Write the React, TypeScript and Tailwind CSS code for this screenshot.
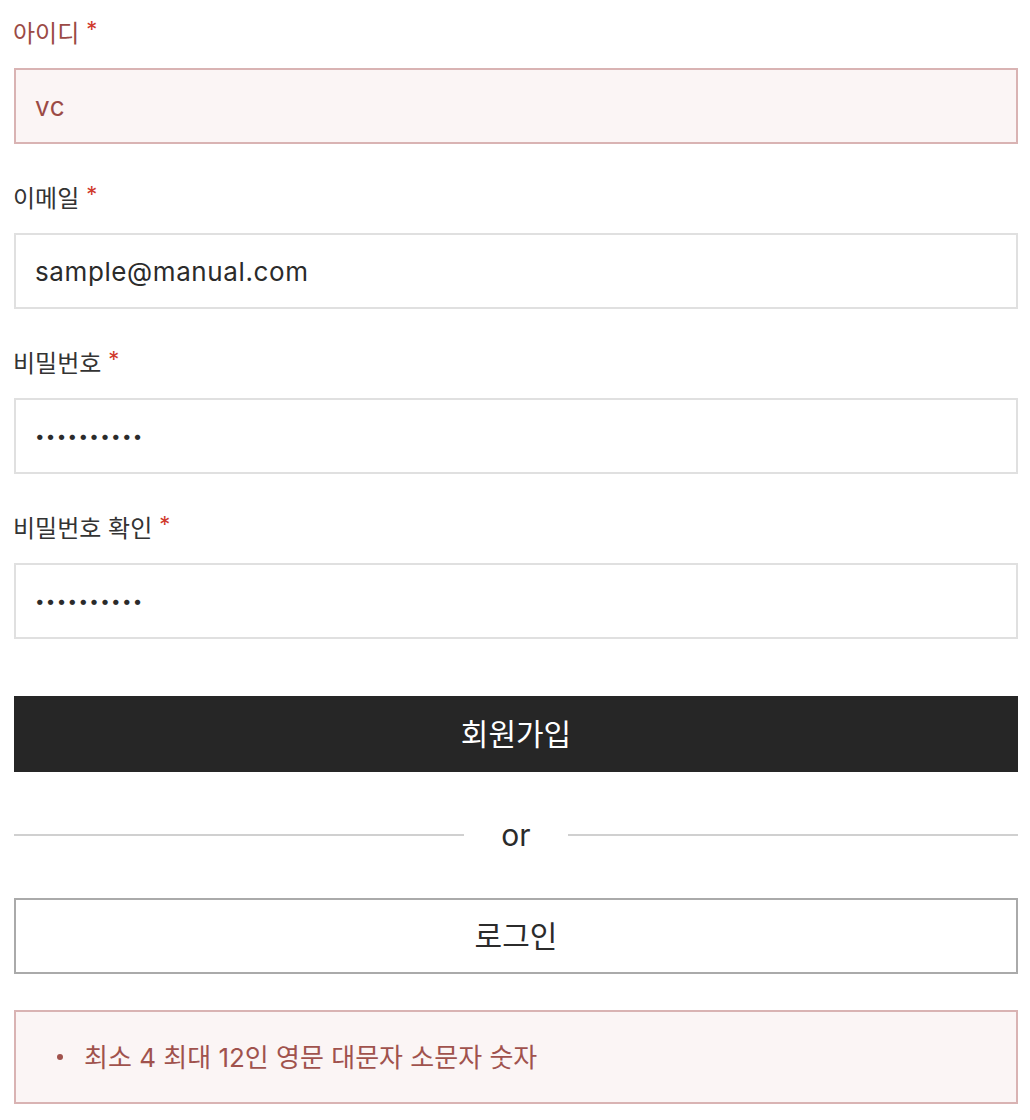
import { useState } from 'react'

interface Field { key: string; label: string; type: string; value: string; error?: boolean }

const fields: Field[] = [
  { key: 'id', label: '아이디', type: 'text', value: 'vc', error: true },
  { key: 'email', label: '이메일', type: 'email', value: 'sample@manual.com' },
  { key: 'pw', label: '비밀번호', type: 'password', value: '1234567890' },
  { key: 'pw2', label: '비밀번호 확인', type: 'password', value: '1234567890' },
]

export default function App() {
  const [values, setValues] = useState<Record<string, string>>(
    Object.fromEntries(fields.map(f => [f.key, f.value]))
  )

  return (
    <div className="bg-white min-h-[1120px] pl-[14px] pr-[12px] pt-4 text-[#2b2b2b]" style={{ fontFamily: 'Inter, "Noto Sans CJK KR", sans-serif' }}>
      {fields.map(f => (
        <div key={f.key} className="mb-[37px]">
          <label className={`flex items-start h-9 leading-9 text-[24px] mb-4 -ml-[1px] ${f.error ? 'text-[#9b4a45]' : 'text-[#333]'}`}>
            {f.label}
            <span className="text-[#d0392b] text-[22px] leading-6 ml-[7px] mt-[1px]">*</span>
          </label>
          <input
            type={f.type}
            value={values[f.key]}
            onChange={e => setValues(prev => ({ ...prev, [f.key]: e.target.value }))}
            className={`block w-full h-[76px] px-[19px] outline-none border-2 ${f.type === 'password' ? 'text-[17px] tracking-[1.3px]' : 'text-[26px] tracking-[0.6px]'} ${f.error ? 'bg-[#fbf5f5] border-[#d9b3b3] text-[#9b4a45]' : 'bg-white border-[#e0e0e0] text-[#2b2b2b]'}`}
          />
        </div>
      ))}

      <button className="block w-full h-[76px] mt-[57px] bg-[#262626] text-white text-[30px]">회원가입</button>

      <div className="flex items-center h-[126px]">
        <div className="flex-1 h-[2px] bg-[#d0d0d0]" />
        <span className="w-[104px] text-center text-[30px] text-[#2b2b2b]">or</span>
        <div className="flex-1 h-[2px] bg-[#d0d0d0]" />
      </div>

      <button className="block w-full h-[76px] border-2 border-[#aaaaaa] bg-white text-[30px] text-[#2b2b2b]">로그인</button>

      <div className="mt-9 h-[94px] flex items-center pl-[41px] border-2 border-[#d9b3b3] bg-[#fbf5f5] text-[#a0524d]">
        <span className="w-[6px] h-[6px] rounded-full bg-[#a0524d] mr-[21px]" />
        <span className="text-[26px]">최소 4 최대 12인 영문 대문자 소문자 숫자</span>
      </div>
    </div>
  )
}
